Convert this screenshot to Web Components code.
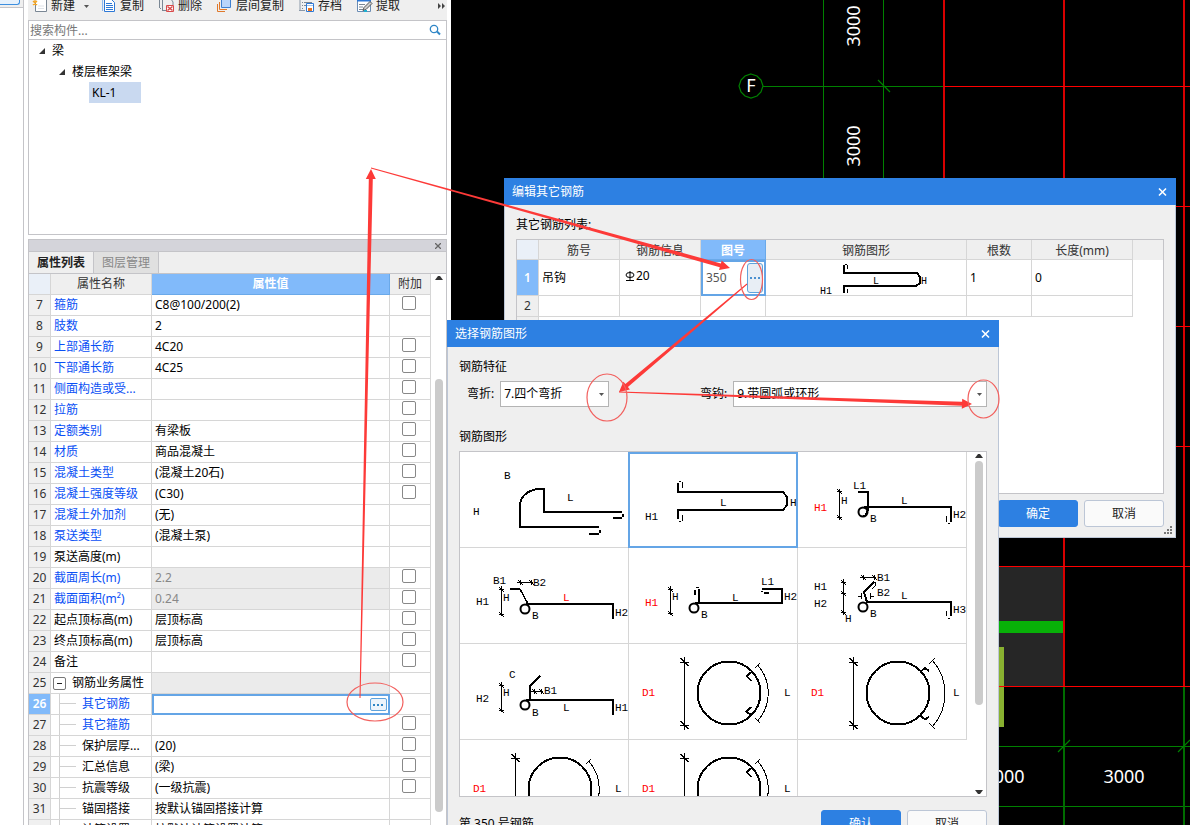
<!DOCTYPE html>
<html lang="zh-CN">
<head>
<meta charset="utf-8">
<title>钢筋属性编辑</title>
<style>
html, body { margin: 0; height: 100%; }
body { overflow: hidden; background: #fff; color: #000; font: 12px/20px "Noto Sans", "Noto Sans CJK SC", sans-serif; }
</style>
</head>
<body>
<modeler-app></modeler-app>
<script>
const RESET = `
  *, *::before, *::after { box-sizing: border-box; }
  button, input, select { font: inherit; color: inherit; margin: 0; padding: 0; border: 0; background: none; border-radius: 0; }
  svg { display: block; }
`;
function define(name, html, setup) {
  const template = document.createElement('template');
  template.innerHTML = `<style>${RESET}</style>` + html;
  customElements.define(name, class extends HTMLElement {
    constructor() {
      super();
      this.attachShadow({ mode: 'open' }).append(template.content.cloneNode(true));
    }
    connectedCallback() { if (setup) setup(this, this.shadowRoot); }
  });
}

/* ---------- toolbar ---------- */
define('tool-button', `
<style>
  :host { display: block; flex: none; }
  button { display: flex; align-items: center; gap: 3px; height: 24px; color: #222; white-space: nowrap; }
</style>
<button type="button"><slot name="icon"></slot><slot></slot></button>`);

define('tool-bar', `
<style>
  :host { display: flex; align-items: flex-end; gap: 15px; height: 20px; padding: 0 0 2px 4px; background: #efefef; overflow: hidden; }
  .new { display: flex; align-items: center; gap: 9px; margin-right: -3px; }
  .more { margin-left: auto; height: 24px; }
</style>
<div class="new">
<tool-button><svg slot="icon" width="16" height="16"><path d="M3.500 4.500v9h11v-12l-3-3h-3" fill="#fff" stroke="#7a8794"/><path d="M6 8h6M6 10.500h6" stroke="#dfe3e8"/><path d="M1 3l4 4M5 3l-4 4M3 1v6" stroke="#f5a623" stroke-width="1.300"/></svg>新建</tool-button>
<svg width="5" height="3"><path d="M0 0h5L2.500 3z" fill="#555"/></svg>
</div>
<tool-button><svg slot="icon" width="16" height="16"><path d="M1.500 13V1" stroke="#8db8f0"/><path d="M3.500 1.500h7l3 3v9h-10z" fill="#fff" stroke="#2d78d6"/><path d="M5 5.500h6M5 7.500h7M5 9.500h7M5 11.500h7" stroke="#2d78d6"/></svg>复制</tool-button>
<tool-button><svg slot="icon" width="16" height="16"><path d="M1 10.500h1M.500 10V1M3 12.500h4M3.500 2v11M8 1h4l2 3v3" fill="none" stroke="#7a8794"/><path d="M7.500 7.500h7v6h-7z" fill="#fff" stroke="#d84a4a"/><path d="M8.500 8.500l5 4M13.500 8.500l-5 4" stroke="#d84a4a" stroke-width="1.500"/></svg>删除</tool-button>
<tool-button><svg slot="icon" width="16" height="16"><path d="M4.500 0h9v9.500h-9z" fill="#b9d5fb" stroke="#3f80d0"/><path d="M2.500 4v7.500H10M.500 6v7.500H8" fill="none" stroke="#e0792b"/></svg>层间复制</tool-button>
<tool-button><svg slot="icon" width="16" height="16"><path d="M1 2v11M0 12.500h6" stroke="#8a98a8" fill="none"/><path d="M0 1h14" stroke="#2d78d6" stroke-width="2"/><path d="M3 4.500h1M5 4.500h8M3 7.500h1M5 7.500h2M3 10.500h1" stroke="#7a8794"/><path d="M7.500 5.500h7v8h-7z" fill="#fff" stroke="#2d78d6"/><path d="M8 7.500h6" stroke="#9fc3f0"/><path d="M9 10h4v3H9z" fill="#e87520"/></svg>存档</tool-button>
<tool-button><svg slot="icon" width="16" height="16"><path d="M.500 2.500h13v11H.500z" fill="#fff" stroke="#6a8db5"/><path d="M0 2h14" stroke="#2d78d6" stroke-width="3"/><path d="M2 6.500h6M2 9h4M2 11.500h4" stroke="#7a8794"/><path d="M13 3.500l2 2-6 6-3 1 1-3z" fill="#ccc" stroke="#555"/><path d="M7 13h3" stroke="#20b0d0" stroke-width="2"/></svg>提取</tool-button>
<button class="more" type="button" aria-label="更多"><svg width="10" height="6"><path d="M1 0l3 3-3 3zM5 0l3 3-3 3z" fill="#444"/></svg></button>`);

/* ---------- component tree ---------- */
define('component-tree', `
<style>
  :host { display: flex; flex-direction: column; flex: none; border: 1px solid #c4c4c8; height: 215px; background: #fff; }
  label { display: flex; align-items: center; height: 19px; border-bottom: 1px solid #c4c4c8; padding: 0 5px 0 1px; }
  input { flex: 1; min-width: 0; height: 18px; padding-top: 2px; outline: 0; }
  input::placeholder { color: #777; opacity: 1; }
  ul { list-style: none; margin: 0; padding: 0; }
  li span { display: flex; align-items: center; gap: 7px; height: 21px; }
  .l1 { padding-left: 10px; } .l2 { padding-left: 30px; }
  li .leaf { margin-left: 60px; width: 52px; padding-left: 3px; background: #c9d9f0; }
</style>
<label><input type="text" placeholder="搜索构件..." aria-label="搜索构件"><svg width="12" height="12"><circle cx="5" cy="5" r="3.700" fill="none" stroke="#2f86c6" stroke-width="1.300"/><path d="M8 7.500L11 10.500" stroke="#2f86c6" stroke-width="2"/></svg></label>
<ul>
<li><span class="l1"><svg width="6" height="6"><path d="M6 0v6H0z" fill="#333"/></svg>梁</span>
<ul><li><span class="l2"><svg width="6" height="6"><path d="M6 0v6H0z" fill="#333"/></svg>楼层框架梁</span>
<ul><li><span class="leaf">KL-1</span></li></ul></li></ul></li>
</ul>`);

/* ---------- scroll bar ---------- */
define('scroll-rail', `
<style>
  :host { display: flex; flex-direction: column; align-items: center; flex: none; width: 15px; background: #fff; padding: 2px 0; }
  i { display: block; width: 8px; border-radius: 4px; background: #cbcbcb; flex: none; height: var(--thumb); margin-top: var(--start); }
  .down { margin-top: auto; }
  :host([open-end]) .down { display: none; }
</style>
<svg width="8" height="4"><path d="M0 4l3-4h2l3 4z" fill="#333"/></svg><i></i>
<svg class="down" width="8" height="4"><path d="M0 0l3 4h2l3-4z" fill="#333"/></svg>`);

/* ---------- property panel ---------- */
const PROPS = [
  [7,'箍筋','C8@100/200(2)','bc'],[8,'肢数','2','b'],[9,'上部通长筋','4C20','bc'],[10,'下部通长筋','4C25','bc'],
  [11,'侧面构造或受...','','bc'],[12,'拉筋','','bc'],[13,'定额类别','有梁板','bc'],[14,'材质','商品混凝土','bc'],
  [15,'混凝土类型','(混凝土20石)','bc'],[16,'混凝土强度等级','(C30)','bc'],[17,'混凝土外加剂','(无)','b'],
  [18,'泵送类型','(混凝土泵)','b'],[19,'泵送高度(m)','',''],[20,'截面周长(m)','2.2','bcg'],[21,'截面面积(m²)','0.24','bcg'],
  [22,'起点顶标高(m)','层顶标高','c'],[23,'终点顶标高(m)','层顶标高','c'],[24,'备注','','c'],[25,'钢筋业务属性','','gp'],
  [26,'其它钢筋','','bks'],[27,'其它箍筋','','bkc'],[28,'保护层厚...','(20)','kc'],[29,'汇总信息','(梁)','kc'],
  [30,'抗震等级','(一级抗震)','kc'],[31,'锚固搭接','按默认锚固搭接计算','k'],[32,'计算设置','按默认计算设置计算','k'],
];
define('property-panel', `
<style>
  :host { display: flex; flex-direction: column; flex: 1; min-height: 0; border: 1px solid #c4c4c8; border-bottom: 0; background: #fff; }
  .bar { display: flex; justify-content: flex-end; align-items: center; height: 12px; flex: none; padding-right: 5px; background: #d4d4da; border-bottom: 1px solid #c4c4c8; }
  .bar button { display: flex; }
  .tabs { display: flex; flex: none; height: 21px; background: #efefef; }
  .tabs button { width: 65px; border-right: 1px solid #c4c4c8; color: #888; background: #e0e0e0; }
  .tabs .on { color: #222; font-weight: 600; background: #efefef; }
  .body { display: flex; flex: 1; min-height: 0; overflow: hidden; border-top: 1px solid #c4c4c8; }
  .view { flex: 1; min-width: 0; overflow: hidden; }
  scroll-rail { --thumb: 433px; --start: 99px; }
  table { width: 100%; table-layout: fixed; border-spacing: 0; }
  th, td { height: 21px; padding: 0; font-weight: 400; line-height: 20px; border-right: 1px solid #d6d6d6; border-bottom: 1px solid #d6d6d6; white-space: nowrap; overflow: hidden; }
  td { padding-left: 3px; }
  thead th { background: #efefef; color: #333; }
  thead th:first-child { background: #eaf0f8; }
  thead .hot { background: #81bafa; border-color: #6aa9e9; color: #fff; font-weight: 600; }
  tbody th { background: #f0f0f0; color: #333; }
  .b { color: #0a50f5; }
  .g { background: #ebebeb; color: #888; }
  .sel { background: #81bafa; color: #fff; font-weight: 600; }
  .check { padding: 0 2px 4px 0; text-align: center; line-height: 0; }
  input { appearance: none; width: 14px; height: 14px; border: 1px solid #888; border-radius: 2px; background: #fff; vertical-align: middle; }
  .edit { border: 2px solid #64a5e6; padding: 0 1px 0 0; }
  .edit button { display: flex; align-items: center; justify-content: center; margin-left: auto; width: 17px; height: 13px; border: 1px solid #5fa3dc; border-radius: 2px; background: #edf4fb; }
  .kid, .group { display: flex; align-items: center; height: 20px; }
  .kid::before { content: ""; width: 17px; height: 20px; margin: 0 6px 0 5px; background: linear-gradient(#d0d0d0, #d0d0d0) 0 0 / 1px 20px no-repeat, linear-gradient(#d0d0d0, #d0d0d0) 0 9px / 17px 1px no-repeat; }
  .group { gap: 6px; margin-left: -1px; }
</style>
<div class="bar"><button type="button" aria-label="关闭面板"><svg width="6" height="6"><path d="M0 0l6 6M6 0L0 6" stroke="#666" stroke-width="1.300"/></svg></button></div>
<div class="tabs"><button type="button" class="on">属性列表</button><button type="button">图层管理</button></div>
<div class="body"><div class="view"><table>
<colgroup><col style="width:22px"><col style="width:101px"><col><col style="width:41px"></colgroup>
<thead><tr><th></th><th>属性名称</th><th class="hot">属性值</th><th>附加</th></tr></thead><tbody></tbody>
</table></div><scroll-rail open-end></scroll-rail></div>`, (host, root) => {
  root.querySelector('tbody').innerHTML = PROPS.map(([n, name, value, f]) => {
    const has = c => f.includes(c);
    const label = has('k') ? `<div class="kid">${name}</div>` : has('p')
      ? `<div class="group"><svg width="13" height="13"><rect x=".5" y=".5" width="12" height="12" rx="1.500" fill="#fff" stroke="#777"/><path d="M4 6.500h5" stroke="#222"/></svg>${name}</div>` : name;
    const cell = has('s')
      ? '<td class="edit"><button type="button" aria-label="编辑其它钢筋"><svg width="11" height="2"><path d="M0 0h2v2H0zM4 0h2v2H4zM8 0h2v2H8z" fill="#2f86c6"/></svg></button></td>'
      : `<td class="${has('g') ? 'g' : ''}">${value}</td>`;
    return `<tr><th class="${has('s') ? 'sel' : ''}">${n}</th><td class="${has('b') ? 'b' : ''}">${label}</td>${cell}<td class="check">${has('c') ? `<input type="checkbox" aria-label="附加 ${name}">` : ''}</td></tr>`;
  }).join('');
});

/* ---------- drawing area ---------- */
define('cad-canvas', `
<style>
  :host { display: block; flex: 1; min-width: 0; background: #000; overflow: hidden; }
  text { font-size: 18px; fill: #fff; text-anchor: middle; }
</style>
<svg width="1200" height="1000" viewBox="451 0 1200 1000" shape-rendering="crispEdges">
<path d="M999 567h65v119h-65z" fill="#262626"/><path d="M999 621h65v12h-65z" fill="#08b008"/><path d="M999 647h5v80h-5z" fill="#88b030"/>
<g fill="#008000"><path d="M823 0h1v1000h-1zM883 0h1v700h-1zM763 86h181v1H763zM451 746h1200v1H451zM451 806h1200v1H451z"/><path d="M1063 687h2v400h-2zM1183 687h2v400h-2z" fill="#006c00"/></g>
<g stroke="#008000" fill="none" shape-rendering="auto" stroke-width="1.200"><path d="M878 80l12 12M1058 752l12-12M1178 752l12-12"/><path d="M751 74l6 2 4 4 2 6-2 6-4 4-6 2-6-2-4-4-2-6 2-6 4-4z"/></g>
<g fill="#d80000"><path d="M943 0h2v538h-2zM1063 0h2v687h-2zM1183 0h2v687h-2z"/><path d="M944 86h707v1H944zM944 206h707v1H944zM944 326h707v1H944zM944 446h707v1H944zM944 566h707v1H944zM944 686h707v1H944z" fill="#f00"/></g>
<text x="751" y="92">F</text><text transform="translate(860 26) rotate(-90)">3000</text><text transform="translate(860 146) rotate(-90)">3000</text>
<text x="1004" y="783">3000</text><text x="1124" y="783">3000</text>
</svg>`);

/* ---------- dialog window ---------- */
define('app-dialog', `
<style>
  :host { display: flex; flex-direction: column; background: #efefef; border: 1px solid #bcc6d6; border-top: 0; }
  header { display: flex; align-items: center; justify-content: space-between; flex: none; height: 27px; margin: 0 -1px; padding: 0 8px 0 8px; background: #2d80e2; color: #fff; }
  button { display: flex; }
</style>
<header><slot name="title"></slot><button type="button" aria-label="关闭"><svg width="10" height="10"><path d="M1 1.500l7 7M8 1.500L1 8.500" stroke="#fff" stroke-width="1.600"/></svg></button></header>
<slot></slot>`);

define('dialog-button', `
<style>
  :host { display: block; width: 80px; }
  button { width: 100%; height: 27px; border: 1px solid #bcc6d6; border-radius: 3px; background: #fafafa; color: #222; }
  :host([primary]) button { background: #2d80e2; border-color: #2d80e2; color: #fff; }
</style>
<button type="button"><slot></slot></button>`);

/* ---------- rebar list ---------- */
define('rebar-table', `
<style>
  :host { display: block; background: #fff; border: 1px solid #c4c4c8; overflow: hidden; }
  .head { background: linear-gradient(#efefef, #efefef) 0 0 / 100% 20px no-repeat; }
  table { width: 616px; table-layout: fixed; border-spacing: 0; }
  th, td { padding: 0; font-weight: 400; border-right: 1px solid #d6d6d6; border-bottom: 1px solid #d6d6d6; height: 21px; line-height: 18px; white-space: nowrap; }
  thead th { height: 20px; padding-top: 3px; line-height: 16px; color: #333; }
  thead th:first-child { background: #eaf0f8; }
  thead .hot { background: #81bafa; color: #fff; font-weight: 600; border-color: #6aa9e9; }
  tbody th { background: #efefef; color: #333; }
  tbody .sel { background: #81bafa; color: #fff; font-weight: 600; }
  tr.item td, tr.item th { height: 36px; }
  td { padding-left: 3px; }
  .info { display: flex; align-items: center; gap: 1px; padding-left: 2px; margin-top: -4px; }
  td.edit { border: 2px solid #64a5e6; padding: 0 1px 0 3px; }
  .edit div { display: flex; align-items: center; justify-content: space-between; color: #555; }
  .edit button { display: flex; align-items: center; justify-content: center; width: 16px; height: 30px; border: 1px solid #5fa3dc; border-radius: 3px; background: #e8eef5; }
  svg text { font: 10px "Liberation Mono", monospace; }
</style>
<div class="head"><table>
<colgroup><col style="width:22px"><col style="width:81px"><col style="width:81px"><col style="width:65px"><col style="width:201px"><col style="width:65px"><col style="width:101px"></colgroup>
<thead><tr><th></th><th>筋号</th><th>钢筋信息</th><th class="hot">图号</th><th>钢筋图形</th><th>根数</th><th>长度(mm)</th></tr></thead>
<tbody><tr class="item"><th class="sel">1</th><td>吊钩</td>
<td><div class="info"><svg width="10" height="12"><path d="M5 1v9M1 10.500h8" fill="none" stroke="#000"/><ellipse cx="5" cy="5" rx="4" ry="2.500" fill="none" stroke="#000"/></svg>20</div></td>
<td class="edit"><div>350<button type="button" aria-label="选择钢筋图形"><svg width="10" height="2"><path d="M0 0h2v2H0zM4 0h2v2H4zM8 0h2v2H8z" fill="#4a90d0"/></svg></button></div></td>
<td style="padding:0"><svg width="200" height="35" shape-rendering="crispEdges"><g fill="none" stroke="#000" stroke-width="2"><path d="M78 5v8h73l3 4v6l-4 3H78v7"/><path d="M81.500 5v4M81.500 29v4M79 4h2" stroke-width="1"/></g><text x="107" y="24">L</text><text x="155" y="24">H</text><text x="54" y="34">H1</text></svg></td>
<td>1</td><td>0</td></tr>
<tr><th>2</th><td></td><td></td><td></td><td></td><td></td><td></td></tr>
<tr><th></th><td style="border:0" colspan="6"></td></tr></tbody>
</table></div>`);

/* ---------- combo box ---------- */
define('combo-box', `
<style>
  :host { display: block; }
  label { display: flex; align-items: center; gap: 6px; }
  span { display: grid; flex: 1; align-items: center; }
  b { font-weight: 400; }
  select { appearance: none; grid-area: 1 / 1; width: 100%; height: 26px; padding: 0 20px 0 3px; border: 1px solid #b4b4b4; background: #fff; }
  svg { grid-area: 1 / 1; justify-self: end; margin-right: 5px; pointer-events: none; }
</style>
<label><b></b><span><select><option></option></select><svg width="5" height="3"><path d="M0 0h5L2.500 3z" fill="#555"/></svg></span></label>`,
(host, root) => {
  root.querySelector('b').textContent = host.getAttribute('label');
  root.querySelector('option').textContent = host.getAttribute('value');
});

/* ---------- shape gallery ---------- */
const t = (x, y, s, red) => `<text x="${x}" y="${y}"${red ? ' fill="#f00"' : ''}>${s}</text>`;
const bold = d => `<path d="${d}" class="w"/>`;
const thin = d => `<path d="${d}" class="n"/>`;
const loop = (x, y) => `<circle cx="${x}" cy="${y}" r="4.500" class="w" shape-rendering="auto"/>`;
const tickY = (x, y) => `M${x - 2.5} ${y}h5M${x - 2.5} ${y - 2.5}l5 5`;
const dimY = (x, top, bottom, ...ys) => thin(`M${x} ${top}V${bottom}` + ys.map(y => tickY(x, y + .5)).join(''));
const dimX = (y, a, b, ...xs) => thin(`M${a} ${y}H${b}` + xs.map(x => `M${x + .5} ${y - 2.5}v5M${x - 2} ${y - 2.5}l5 5`).join(''));
const ring = (label, hooks, outer) => t(13, 52, label, true)
  + thin('M55.500 13V86M51 18.500h9M51.500 14l8 8M51 81.500h9M51.500 77l8 8')
  + '<circle cx="100" cy="49" r="31.500" class="w"/>' + (hooks ? bold(hooks) : '') + thin(outer) + t(155, 52, 'L');
const INNER_ARC = 'M129 21.500A42 42 0 0 1 129 76.500M126 24l5-5M126 74l5 5';
const TOP_HOOK = 'M122.500 28l-5 4 5 5';
const SHAPES = [
  t(44,27,'B') + t(13,63,'H') + t(107,49,'L') + bold('M162 60H84V37H77Q62 40 60 52V75H139M153 66h9M129 82h10M163 62v3M140 78v3'),
  t(16,68,'H1') + t(91,54,'L') + t(161,54,'H') + bold('M49 31v9H154l4 5v8L154 58H49v9') + thin('M53.500 30v6M53.500 63v6M50 29.500h2M50 69.500h2'),
  t(16,59,'H1',1) + dimY(41.5,37,68,39,65) + t(43,52,'H') + t(55,37,'L1') + bold('M60 40h10v15q0 8-5 9.500M66 55H153V70') + thin('M148.500 64v6M150 71.500h2') + loop(65,60) + t(103,52,'L') + t(72,70,'B') + t(155,66,'H2'),
  t(16,57,'H1') + dimY(41.5,38,68,41,66) + t(43,53,'H') + t(33,36,'B1') + t(73,38,'B2') + dimX(34.5,57,73,60,71) + bold('M50 41H60M66 56H153V71') + '<path d="M60 41l8 15" fill="none" stroke="#000" stroke-width="1.500"/>' + loop(65,61) + t(103,53,'L',1) + t(72,71,'B') + t(155,68,'H2'),
  t(16,58,'H1',1) + dimY(41.5,38,67,41,65) + t(43,52,'H') + bold('M70 41v15M66 55H153V41H133M135 45h5M66 42v5') + thin('M67 39.500h3M132 43.500h2') + loop(65,60) + t(132,37,'L1') + t(155,52,'H2') + t(103,53,'L') + t(72,70,'B'),
  t(16,42,'H1') + t(16,59,'H2') + dimY(45.5,31,67,34,45,64) + t(47,74,'H') + dimX(29.5,62,78,65,76) + t(79,33,'B1') + t(79,48,'B2') + bold('M76 34L66 44l3 10H153V68') + thin('M148.500 63v5M150 70.500h2M77 34v4l-3 3M60 48.500h4M63.500 45v6M76 48.500h-4M72.500 45v6') + loop(65,59) + t(103,51,'L') + t(72,69,'B') + t(155,65,'H3'),
  t(16,58,'H2') + dimY(41.5,38,68,41,66) + t(43,52,'H') + t(49,34,'C') + bold('M80 32L70 42v15M66 56H153V71') + dimX(47.5,71,83,74,81) + t(84,50,'B1') + t(103,67,'L') + t(72,72,'B') + t(155,67,'H1') + loop(65,61),
  ring('D1', TOP_HOOK + 'M122.500 63l-5 4.500 5 4', INNER_ARC),
  ring('D1', 'M122 28l5-4 4 3M122 71l5 4.500 4-2.500', 'M135 17A50 50 0 0 1 135 82M131 20l6-6M131 79l6 6'),
  ring('D1', '', INNER_ARC),
  ring('D1', TOP_HOOK, INNER_ARC),
];
define('shape-gallery', `
<style>
  :host { display: flex; flex: none; height: 346px; border: 1px solid #c4c4c8; background: #fff; overflow: hidden; }
  .grid { display: grid; grid-template-columns: repeat(3, 169px); grid-auto-rows: 96px; flex: 1; align-content: start; }
  button { position: relative; border-right: 1px solid #d6d6d6; border-bottom: 1px solid #d6d6d6; }
  .on::after { content: ""; position: absolute; inset: 0 -1px -1px -1px; border: 2px solid #64a5e6; }
  text { font: 11px "Liberation Mono", monospace; }
  .w { fill: none; stroke: #000; stroke-width: 2; }
  .n { fill: none; stroke: #000; }
  scroll-rail { --thumb: 244px; --start: 3px; }
</style>
<div class="grid"></div><scroll-rail></scroll-rail>`, (host, root) => {
  root.querySelector('.grid').innerHTML = SHAPES.map((s, i) =>
    `<button type="button" class="${i === 1 ? 'on' : ''}" aria-label="钢筋图形 ${i + 1}"><svg width="168" height="95" shape-rendering="crispEdges">${s}</svg></button>`).join('');
});

/* ---------- red guide arrows ---------- */
define('guide-arrows', `
<style>
  :host { display: block; position: absolute; inset: 0; overflow: hidden; pointer-events: none; }
</style>
<svg width="1190" height="825"><g class="arrows" fill="#fd3a38"></g>
<g fill="none" stroke="#f2605e" stroke-width="1.200"><ellipse cx="375" cy="702" rx="28" ry="19"/><ellipse cx="751.500" cy="279.500" rx="11" ry="20"/><ellipse cx="607" cy="397.500" rx="20" ry="23.500"/><ellipse cx="983.500" cy="399" rx="15.500" ry="19"/></g></svg>`,
(host, root) => {
  const tapered = ([x1, y1, x2, y2, w]) => {
    const len = Math.hypot(x2 - x1, y2 - y1), ux = (x2 - x1) / len, uy = (y2 - y1) / len;
    const at = (d, s) => `${(x1 + ux * d - uy * s).toFixed(1)},${(y1 + uy * d + ux * s).toFixed(1)}`;
    const neck = len - w * 2;
    return `<polygon points="${[at(0, .5), at(neck, w * .4), at(neck, w), at(len, 0), at(neck, -w), at(neck, -w * .4), at(0, -.5)].join(' ')}"/>`;
  };
  root.querySelector('.arrows').innerHTML =
    [[360, 698, 371, 169, 5], [371, 168, 730, 268, 5], [747, 284, 619, 392, 5], [619, 392, 972, 404, 5]].map(tapered).join('');
});

/* ---------- application ---------- */
define('modeler-app', `
<style>
  :host { display: flex; position: relative; height: 100vh; overflow: hidden; }
  .strip { flex: none; width: 24px; border-right: 1px solid #c4c4c8; }
  .strip div { height: 8px; background: #efefef; border-bottom: 1px solid #c4c4c8; }
  .strip i { display: block; width: 20px; height: 5px; border: 1px solid #3d8fe0; border-width: 0 1px 1px 0; border-radius: 0 0 3px 0; background: #e6f1fc; }
  .side { display: flex; flex-direction: column; flex: none; width: 419px; margin: 0 4px; }
  property-panel { margin-top: 4px; }
  .list { position: absolute; left: 504px; top: 178px; width: 672px; height: 360px; z-index: 1; }
  .list .body { display: flex; flex-direction: column; flex: 1; padding: 10px 11px; }
  .list rebar-table { flex: 1; margin: 4px 0 6px; }
  .pick { position: absolute; left: 447px; top: 320px; width: 552px; height: 526px; z-index: 2; }
  .pick .body { padding: 10px 11px; }
  .fields { display: flex; justify-content: space-between; margin: 4px 0 20px; padding-left: 8px; }
  .fields combo-box:first-child { width: 142px; } .fields combo-box:last-child { width: 287px; }
  shape-gallery { margin-top: 4px; }
  .foot { display: flex; align-items: center; gap: 6px; }
  .list .foot { justify-content: flex-end; }
  .pick .foot { margin-top: 13px; } .pick .foot span { flex: 1; }
  .grip { position: absolute; right: 3px; bottom: 3px; }
  guide-arrows { z-index: 3; }
</style>
<div class="strip"><div><i></i></div></div>
<div class="side"><tool-bar></tool-bar><component-tree></component-tree><property-panel></property-panel></div>
<cad-canvas></cad-canvas>
<app-dialog class="list"><span slot="title">编辑其它钢筋</span>
<div class="body"><div>其它钢筋列表:</div><rebar-table></rebar-table>
<div class="foot"><dialog-button primary>确定</dialog-button><dialog-button>取消</dialog-button></div></div>
<svg class="grip" width="8" height="8"><path d="M6 0h2v2H6zM3 3h2v2H3zM6 3h2v2H6zM0 6h2v2H0zM3 6h2v2H3zM6 6h2v2H6z" fill="#777"/></svg>
</app-dialog>
<app-dialog class="pick"><span slot="title">选择钢筋图形</span>
<div class="body"><div>钢筋特征</div>
<div class="fields"><combo-box label="弯折:" value="7.四个弯折"></combo-box><combo-box label="弯钩:" value="9.带圆弧或环形"></combo-box></div>
<div>钢筋图形</div><shape-gallery></shape-gallery>
<div class="foot"><span>第 350 号钢筋</span><dialog-button primary>确认</dialog-button><dialog-button>取消</dialog-button></div></div>
</app-dialog>
<guide-arrows></guide-arrows>`);
</script>
</body>
</html>
